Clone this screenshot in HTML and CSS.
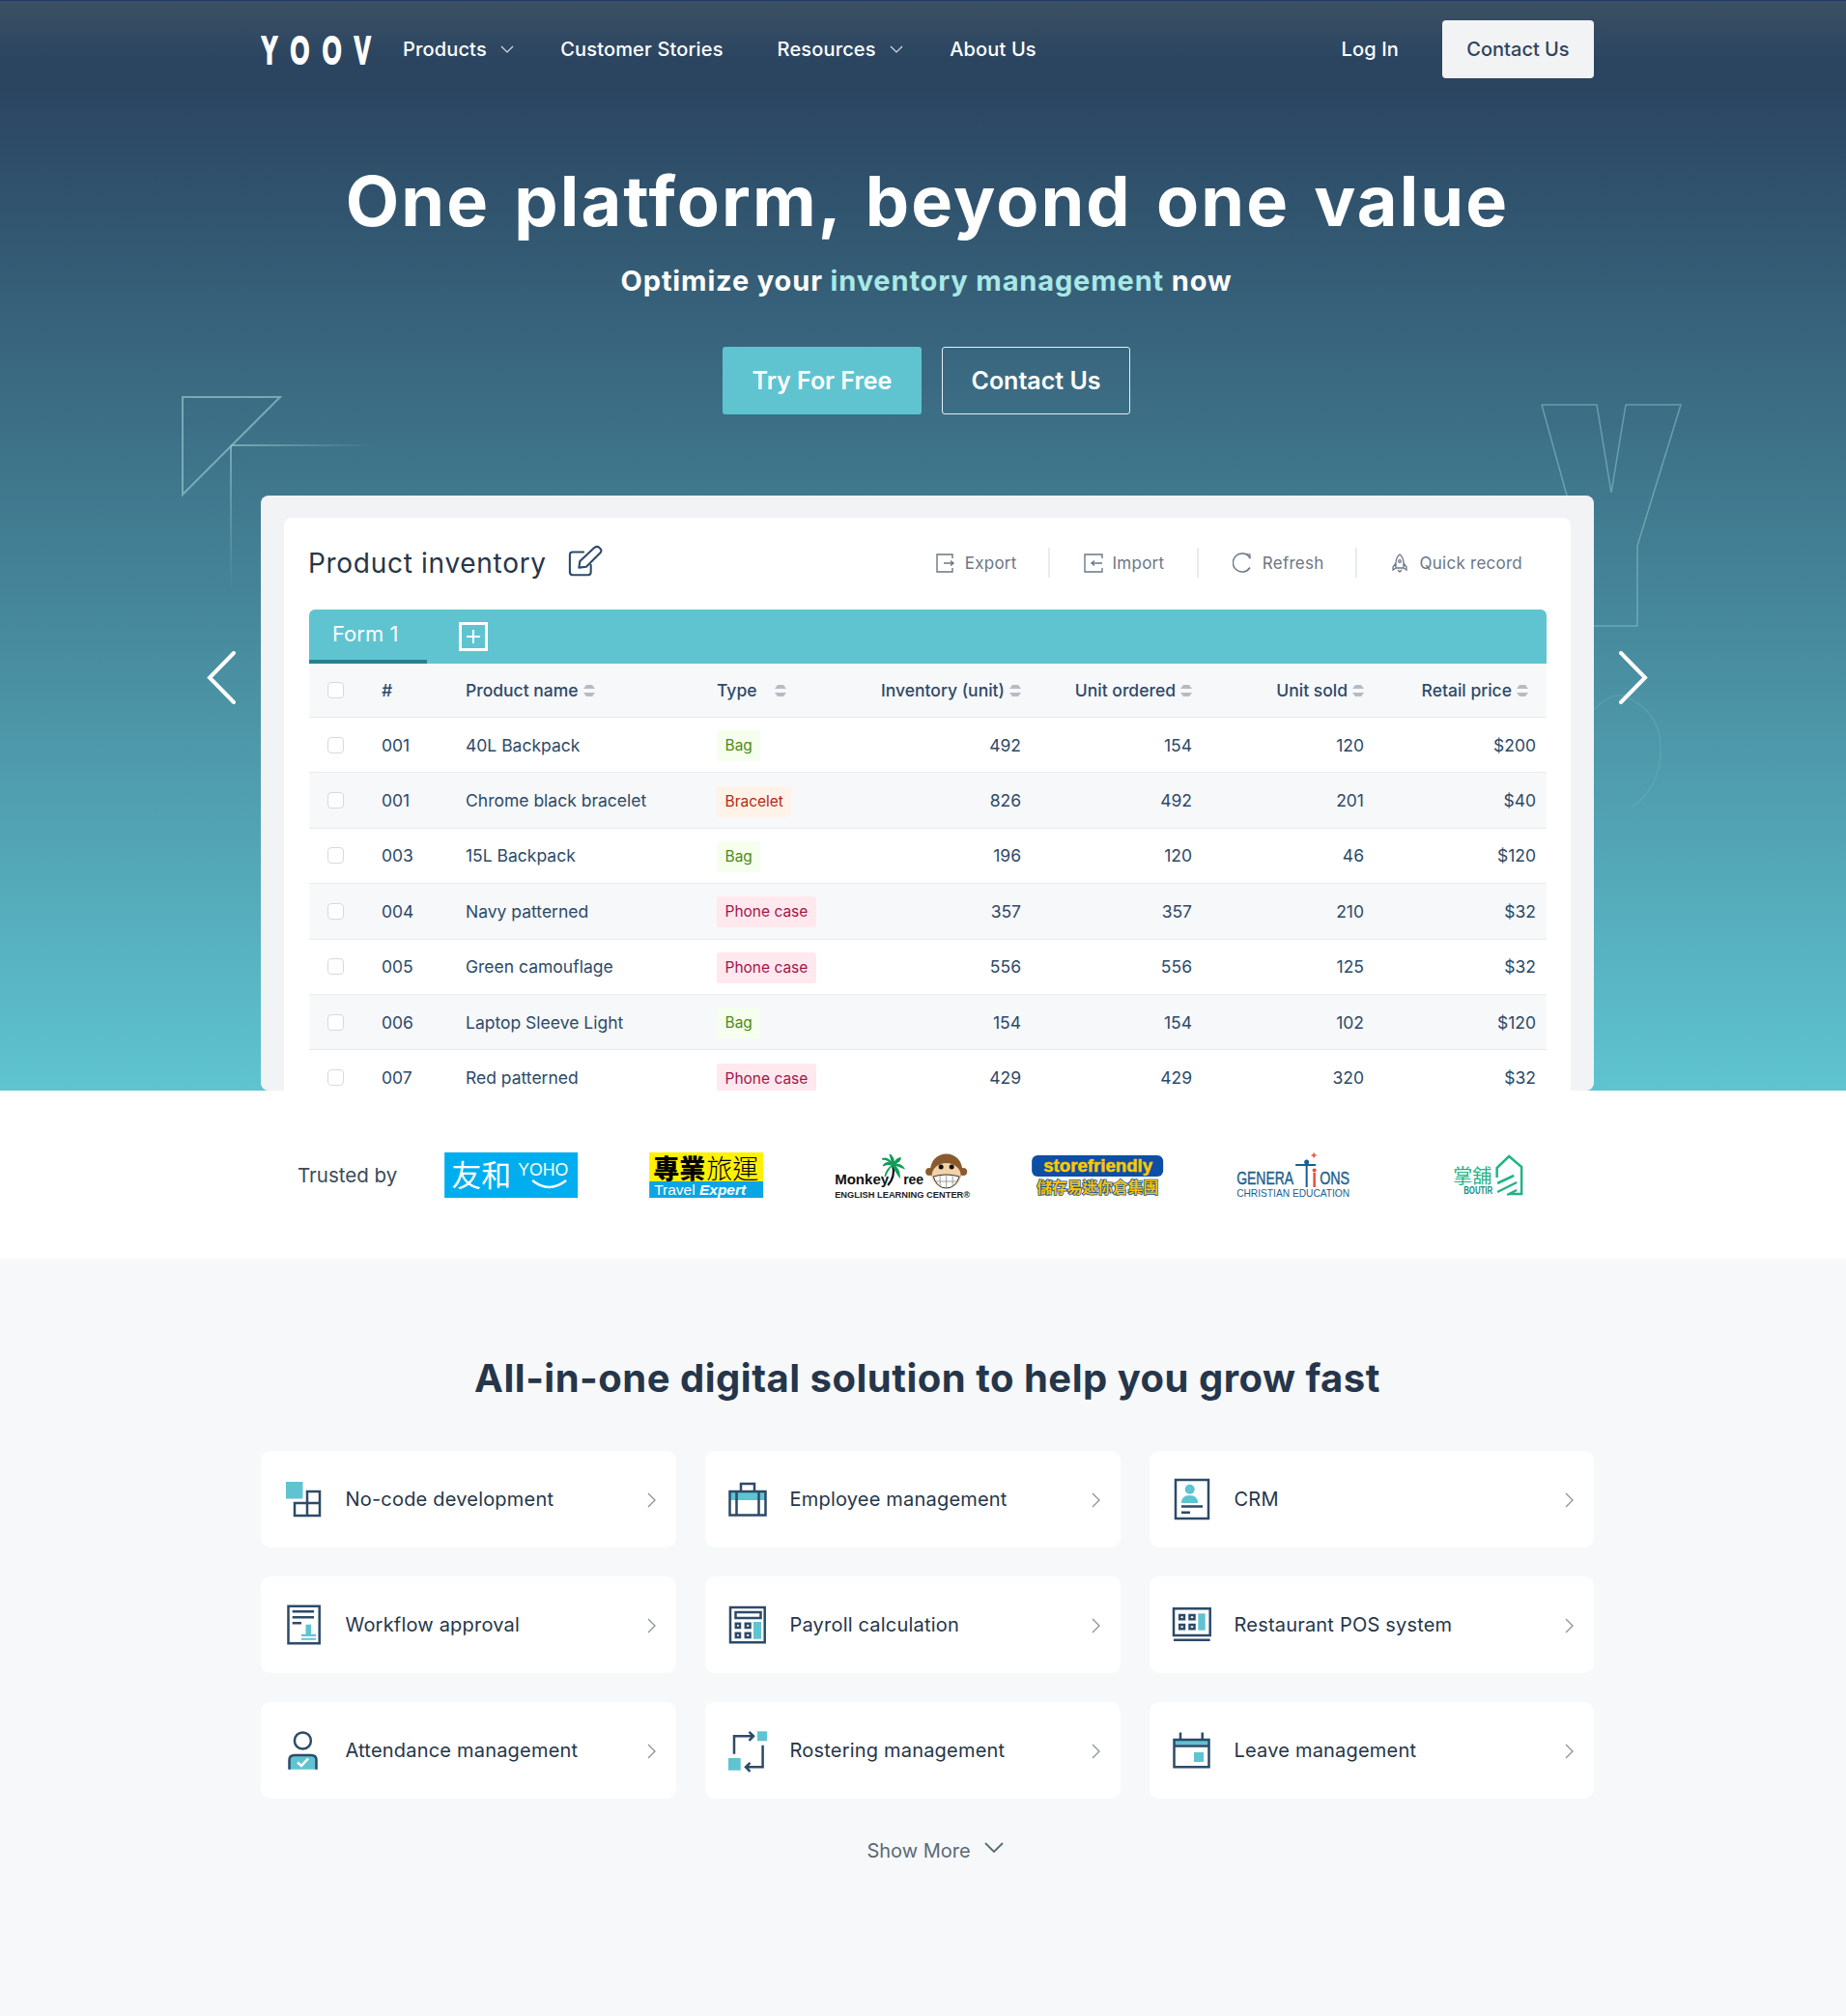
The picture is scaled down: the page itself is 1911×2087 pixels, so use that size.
FILE: index.html
```html
<!DOCTYPE html>
<html lang="en">
<head>
<meta charset="UTF-8" />
<title>YOOV</title>
<link rel="stylesheet" href="styles.css">
</head>
<body>

<section class="hero">
  <svg class="decor" width="1911" height="1129" viewBox="0 0 1911 1129" fill="none">
    <defs>
      <linearGradient id="fade-h" x1="0" x2="1" y1="0" y2="0"><stop offset="0" stop-color="#8fc4cc" stop-opacity=".7"/><stop offset="1" stop-color="#8fc4cc" stop-opacity="0"/></linearGradient>
      <linearGradient id="fade-v" x1="0" x2="0" y1="0" y2="1"><stop offset="0" stop-color="#8fc4cc" stop-opacity=".7"/><stop offset="1" stop-color="#8fc4cc" stop-opacity="0"/></linearGradient>
    </defs>
    <path d="M189 411H290L189 512Z" stroke="#8fc4cc" stroke-opacity=".7" stroke-width="2"/>
    <rect x="239" y="460" width="152" height="2" fill="url(#fade-h)"/>
    <rect x="238" y="461" width="2" height="150" fill="url(#fade-v)"/>
    <path d="M1596 419H1653L1668 510L1683 419H1740L1695 565V648H1650M1596 419L1622 513" stroke="#8fc4cc" stroke-opacity=".55" stroke-width="1.5"/>
    <path d="M1650 735Q1665 718 1680 720Q1719 735 1719 775Q1719 815 1690 835" stroke="#8fc4cc" stroke-opacity=".22" stroke-width="1.5"/>
  </svg>

  <div class="wrap">
    <nav class="nav">
      <svg class="logo" width="116" height="46" viewBox="0 -8 116 46"><text class="logo-text" y="30" transform="scale(.62 1)" x="1 49 103 156">YOOV</text></svg>
      <a class="nav-link nav-products">Products <svg class="nav-chev" width="14" height="8" viewBox="0 0 14 8"><path d="M1 1L7 7L13 1"/></svg></a>
      <a class="nav-link nav-stories">Customer Stories</a>
      <a class="nav-link nav-resources">Resources <svg class="nav-chev" width="14" height="8" viewBox="0 0 14 8"><path d="M1 1L7 7L13 1"/></svg></a>
      <a class="nav-link">About Us</a>
      <a class="nav-link nav-login">Log In</a>
      <a class="nav-contact">Contact Us</a>
    </nav>

    <h1 class="hero-title">One platform, beyond one value</h1>
    <p class="hero-sub">Optimize your <span class="hl">inventory management</span> now</p>
    <div class="hero-btns">
      <a class="btn btn-try">Try For Free</a>
      <a class="btn btn-outline">Contact Us</a>
    </div>

    <div class="card">
      <div class="panel">
        <div class="toolbar">
          <span class="panel-title">Product inventory</span>
          <svg class="edit-icon" width="36" height="34" viewBox="0 0 38 34" fill="none" stroke="#2d4a69" stroke-width="2.2" stroke-linecap="round" stroke-linejoin="round"><path d="M17 7H5Q2 7 2 10V29Q2 32 5 32H22Q25 32 25 29V21"/><path d="M12 24L13 17L29 2Q32 0 34 2L36 4Q37 6 35 8L20 23Z"/></svg>
          <div class="actions">
            <span class="action action-export"><svg width="20" height="20" viewBox="0 0 20 20" fill="none" stroke="#6b7785" stroke-width="1.4"><path d="M17 5V1H1V19H17V15M8 10H18M15 7.500L18 10L15 12.500"/></svg>Export</span>
            <span class="action action-import"><svg width="20" height="20" viewBox="0 0 20 20" fill="none" stroke="#6b7785" stroke-width="1.4"><path d="M19 5V1H1V19H19V15M19 10H8M11 7.500L8 10L11 12.500"/></svg>Import</span>
            <span class="action action-refresh"><svg width="21" height="21" viewBox="0 0 21 21" fill="none" stroke="#6b7785" stroke-width="1.5"><path d="M18 5.500A9.500 9.500 0 1 0 18 15.500"/><path d="M14 1.500L18 2V6.500" stroke-width="1.2"/></svg>Refresh</span>
            <span class="action action-quick"><svg width="18" height="20" viewBox="0 0 16 20" fill="none" stroke="#6b7785" stroke-width="1.3"><path d="M8 1Q12 4 12 10V15H4V10Q4 4 8 1ZM4 10L1 14V17L4 15M12 10L15 14V17L12 15M6 17L8 19L10 17"/><circle cx="8" cy="8" r="1.3"/></svg>Quick record</span>
          </div>
        </div>

        <div class="tabs">
          <span class="tab">Form 1</span>
          <span class="tab-add"></span>
        </div>

        <div class="row row-head">
          <span class="check"></span><span>#</span>
          <span>Product name<i class="sort"></i></span>
          <span>Type<i class="sort sort-wide"></i></span>
          <span class="num">Inventory (unit)<i class="sort"></i></span>
          <span class="num">Unit ordered<i class="sort"></i></span>
          <span class="num">Unit sold<i class="sort"></i></span>
          <span class="num last">Retail price<i class="sort"></i></span>
        </div>
        <div class="row">
          <span class="check"></span><span>001</span><span>40L Backpack</span><span><b class="tag tag-green">Bag</b></span>
          <span class="num">492</span><span class="num">154</span><span class="num">120</span><span class="num">$200</span>
        </div>
        <div class="row row-alt">
          <span class="check"></span><span>001</span><span>Chrome black bracelet</span><span><b class="tag tag-orange">Bracelet</b></span>
          <span class="num">826</span><span class="num">492</span><span class="num">201</span><span class="num">$40</span>
        </div>
        <div class="row">
          <span class="check"></span><span>003</span><span>15L Backpack</span><span><b class="tag tag-green">Bag</b></span>
          <span class="num">196</span><span class="num">120</span><span class="num">46</span><span class="num">$120</span>
        </div>
        <div class="row row-alt">
          <span class="check"></span><span>004</span><span>Navy patterned</span><span><b class="tag tag-pink">Phone case</b></span>
          <span class="num">357</span><span class="num">357</span><span class="num">210</span><span class="num">$32</span>
        </div>
        <div class="row">
          <span class="check"></span><span>005</span><span>Green camouflage</span><span><b class="tag tag-pink">Phone case</b></span>
          <span class="num">556</span><span class="num">556</span><span class="num">125</span><span class="num">$32</span>
        </div>
        <div class="row row-alt">
          <span class="check"></span><span>006</span><span>Laptop Sleeve Light</span><span><b class="tag tag-green">Bag</b></span>
          <span class="num">154</span><span class="num">154</span><span class="num">102</span><span class="num">$120</span>
        </div>
        <div class="row">
          <span class="check"></span><span>007</span><span>Red patterned</span><span><b class="tag tag-pink">Phone case</b></span>
          <span class="num">429</span><span class="num">429</span><span class="num">320</span><span class="num">$32</span>
        </div>
      </div>
    </div>
  </div>

  <svg class="arrow arrow-left" width="31" height="55" viewBox="0 0 31 55" fill="none"><path d="M28 2L3 27.500L28 53"/></svg>
  <svg class="arrow arrow-right" width="31" height="55" viewBox="0 0 31 55" fill="none"><path d="M3 2L28 27.500L3 53"/></svg>
</section>

<section class="trusted">
  <div class="wrap trusted-row">
    <span class="trusted-label">Trusted by</span>
    <div class="logos">
      <svg class="logo-slot" viewBox="0 -10 202 70">
        <rect x="32" y="1" width="138" height="47" fill="#00aeef"/>
        <text class="lg-cjk" x="39" y="36" font-size="31" fill="#fff">友和</text>
        <text class="lg-sans" x="108" y="25" font-size="19" fill="#fff" textLength="52" lengthAdjust="spacingAndGlyphs">YOHO</text>
        <path d="M123 30Q140 44 158 30" fill="none" stroke="#fff" stroke-width="2.500"/>
      </svg>
      <svg class="logo-slot" viewBox="0 -10 202 70">
        <rect x="42" y="1" width="118" height="30" fill="#fff200"/>
        <rect x="42" y="31" width="118" height="17" fill="#0ba5e4"/>
        <text class="lg-cjk lg-heavy" x="46" y="28" font-size="27" fill="#000">專業</text>
        <text class="lg-cjk lg-thin" x="101" y="28" font-size="27" fill="#000">旅運</text>
        <text class="lg-sans" x="47" y="45" font-size="15.500" fill="#fff">Travel <tspan class="lg-expert">Expert</tspan></text>
      </svg>
      <svg class="logo-slot" viewBox="0 -10 202 70">
        <text class="lg-sans lg-bold" x="31" y="34" font-size="15" fill="#111" textLength="56" lengthAdjust="spacingAndGlyphs">Monkey</text>
        <text class="lg-sans lg-bold" x="102" y="34" font-size="15" fill="#111" textLength="21" lengthAdjust="spacingAndGlyphs">ree</text>
        <path d="M91 14Q94 26 86 35" fill="none" stroke="#111" stroke-width="2.200"/>
        <path d="M91 14Q85 9 81 15Q84 12 91 14ZM91 14Q86 5 80 8Q86 7 91 14ZM91 14Q89 5 88 3Q94 8 91 14ZM91 14Q96 6 99 7Q99 10 91 14ZM91 14Q99 12 102 17Q96 14 91 14ZM91 14Q98 18 98 26Q93 19 91 14ZM91 14Q84 19 83 26Q86 18 91 14Z" fill="#0f9d58" stroke="#0f9d58" stroke-width="1.500"/>
        <circle cx="129" cy="21" r="4" fill="#8a5a2e"/><circle cx="164" cy="21" r="4" fill="#8a5a2e"/>
        <circle cx="146.500" cy="19" r="16.500" fill="#8a5a2e"/>
        <ellipse cx="146.500" cy="25" rx="15" ry="13" fill="#f2d2a6"/>
        <circle cx="141" cy="16" r="2.500" fill="#111"/><circle cx="152" cy="16" r="2.500" fill="#111"/>
        <path d="M133 26Q146.500 22 160 26Q156 38 146.500 38Q137 38 133 26Z" fill="#fff" stroke="#333"/>
        <path d="M140 25V36M146.500 24V38M153 25V36M135 31H158" stroke="#777" stroke-width=".7"/>
        <text class="lg-sans lg-bold" x="31" y="48" font-size="9.500" fill="#222" textLength="140" lengthAdjust="spacingAndGlyphs">ENGLISH LEARNING CENTER®</text>
      </svg>
      <svg class="logo-slot" viewBox="0 -10 202 70">
        <rect x="33" y="4" width="136" height="22" rx="6" fill="#0d4ea6"/>
        <text class="lg-sans lg-bold lg-fat" x="45" y="21" font-size="18.500" fill="#fdc800" textLength="113" lengthAdjust="spacingAndGlyphs">storefriendly</text>
        <text class="lg-cjk lg-outline" x="38" y="43" font-size="16" fill="#f5c400" textLength="126">儲存易迷你倉集團</text>
      </svg>
      <svg class="logo-slot" viewBox="0 -10 202 70">
        <text class="lg-sans lg-gen" x="43" y="34" font-size="18" fill="#1a5f8e" textLength="59" lengthAdjust="spacingAndGlyphs">GENERA</text>
        <text class="lg-sans lg-gen" x="129" y="34" font-size="18" fill="#1a5f8e" textLength="31" lengthAdjust="spacingAndGlyphs">ONS</text>
        <path d="M104 14H125M115.500 14V37" stroke="#1a5f8e" stroke-width="2"/>
        <circle cx="115.500" cy="11" r="2.500" fill="#1a5f8e"/>
        <path d="M123.500 22V37" stroke="#e4513c" stroke-width="2.500"/>
        <circle cx="123.500" cy="19.500" r="2" fill="#e4513c"/>
        <path d="M123 1.500V6.500M120.500 4H125.500" stroke="#e4513c" stroke-width="1.500"/>
        <text class="lg-sans" x="43" y="47" font-size="11" fill="#1a5f8e" textLength="117" lengthAdjust="spacingAndGlyphs">CHRISTIAN EDUCATION</text>
      </svg>
      <svg class="logo-slot" viewBox="0 -10 202 70">
        <text class="lg-cjk" x="65" y="33" font-size="20" fill="#1fb487">掌舖</text>
        <text class="lg-sans lg-bold" x="76" y="44" font-size="10" fill="#178f8a" textLength="30" lengthAdjust="spacingAndGlyphs">BOUTIR</text>
        <path d="M110.500 27V17L123 5L136 16V44H123M111 33L128 25M111 42L131 32M121 45L131 40" fill="none" stroke="#1fb487" stroke-width="2.500"/>
      </svg>
    </div>
  </div>
</section>

<section class="solutions">
  <h2 class="solutions-title">All-in-one digital solution to help you grow fast</h2>
  <div class="wrap sol-grid">
    <a class="sol-card">
      <svg class="sol-icon" viewBox="0 0 44 52"><rect class="t" x="4" y="8" width="17.500" height="17.500"/><path class="n" d="M26 30V18H39V43H13V30H39M26 30V43"/></svg>
      <span class="sol-label">No-code development</span>
      <svg class="sol-chev" viewBox="0 0 9 16"><path d="M1 1L8 8L1 15"/></svg>
    </a>
    <a class="sol-card">
      <svg class="sol-icon" viewBox="0 0 44 52"><rect class="t" x="3" y="19" width="38" height="8"/><path class="n" d="M3.500 18H40.500V42.500H3.500ZM15 18V10H29V18M10.500 18V42.500M33.500 18V42.500"/></svg>
      <span class="sol-label">Employee management</span>
      <svg class="sol-chev" viewBox="0 0 9 16"><path d="M1 1L8 8L1 15"/></svg>
    </a>
    <a class="sol-card">
      <svg class="sol-icon" viewBox="0 0 44 52"><circle class="t" cx="19.700" cy="15.700" r="5"/><path class="t" d="M11 30Q11 22 19.500 22Q28 22 28 30Z"/><path class="n" d="M5 6H39V46H5ZM11 33.500H33M11 39.700H20"/></svg>
      <span class="sol-label">CRM</span>
      <svg class="sol-chev" viewBox="0 0 9 16"><path d="M1 1L8 8L1 15"/></svg>
    </a>
    <a class="sol-card">
      <svg class="sol-icon" viewBox="0 0 44 52"><path class="n" d="M6.500 6.700H38.700V45.300H6.500ZM10.700 12.300H33M10.700 18.300H33M10.700 24.300H20"/><path class="t" d="M24.500 25.700H30V35.700H35V38H20V35.700H24.500ZM20 39.700H35V41.700H20Z"/></svg>
      <span class="sol-label">Workflow approval</span>
      <svg class="sol-chev" viewBox="0 0 9 16"><path d="M1 1L8 8L1 15"/></svg>
    </a>
    <a class="sol-card">
      <svg class="sol-icon" viewBox="0 0 44 52"><rect class="t" x="28" y="23" width="8" height="17.700"/><path class="n" d="M4 8H39.700V44.300H4ZM9.500 13H35.500V19H9.500ZM9.800 24.800H14V29H9.800ZM19.800 24.800H24.500V29H19.800ZM9.800 34.800H14V39H9.800ZM19.800 34.800H24.500V39H19.800Z"/></svg>
      <span class="sol-label">Payroll calculation</span>
      <svg class="sol-chev" viewBox="0 0 9 16"><path d="M1 1L8 8L1 15"/></svg>
    </a>
    <a class="sol-card">
      <svg class="sol-icon" viewBox="0 0 44 52"><rect class="t" x="28.300" y="14.300" width="7.400" height="17.400"/><path class="n" d="M3 9.300H40.700V37H3ZM3 41.800H40.700M9.200 16H14V20.300H9.200ZM19.500 16H24.500V20.300H19.500ZM9.200 26H14V30.300H9.200ZM19.500 26H24.500V30.300H19.500Z"/></svg>
      <span class="sol-label">Restaurant POS system</span>
      <svg class="sol-chev" viewBox="0 0 9 16"><path d="M1 1L8 8L1 15"/></svg>
    </a>
    <a class="sol-card">
      <svg class="sol-icon" viewBox="0 0 44 52"><path class="t" d="M7.500 45.700V36Q7.500 31 13 31H30Q35.500 31 35.500 36V45.700Z"/><path class="n" d="M7.500 45.700V36Q7.500 31 13 31H30Q35.500 31 35.500 36V45.700"/><circle class="n" cx="21.400" cy="16" r="8.500"/><path class="w" d="M16 38.500L20 42L27 34.500"/></svg>
      <span class="sol-label">Attendance management</span>
      <svg class="sol-chev" viewBox="0 0 9 16"><path d="M1 1L8 8L1 15"/></svg>
    </a>
    <a class="sol-card">
      <svg class="sol-icon" viewBox="0 0 44 52"><rect class="t" x="32" y="6.300" width="10" height="10"/><rect class="t" x="2" y="34" width="12.700" height="12.700"/><path class="n" d="M8 29.700V11.300H27M23.500 6.800L28 11.300L23.500 15.800M37.600 20.700V43.300H20M24.500 38.800L20 43.300L24.500 47.800"/></svg>
      <span class="sol-label">Rostering management</span>
      <svg class="sol-chev" viewBox="0 0 9 16"><path d="M1 1L8 8L1 15"/></svg>
    </a>
    <a class="sol-card">
      <svg class="sol-icon" viewBox="0 0 44 52"><rect class="t" x="3" y="15.500" width="37" height="5"/><rect class="t" x="24" y="28" width="10" height="10"/><path class="n" d="M3.500 15H39.500V43.300H3.500ZM3 21.500H40M10 7.500V15M32.700 7.500V15"/></svg>
      <span class="sol-label">Leave management</span>
      <svg class="sol-chev" viewBox="0 0 9 16"><path d="M1 1L8 8L1 15"/></svg>
    </a>
  </div>
  <a class="show-more">Show More <svg width="20" height="12" viewBox="0 0 20 12" fill="none"><path d="M1 1L10 10L19 1"/></svg></a>
</section>

</body>
</html>
```

FILE: styles.css
```css
* { box-sizing: border-box; }
body { margin: 0; font-family: Inter, "Noto Sans CJK TC", sans-serif; color: #2d4a69; background: #f7f8fa; }
a { text-decoration: none; color: inherit; }
p, h1, h2 { margin: 0; }

.wrap { width: 1380px; margin-left: 270px; position: relative; }

/* hero */
.hero {
  position: relative;
  height: 1129px;
  overflow: hidden;
  border-top: 1px solid #1f3a68;
  background:
    linear-gradient(rgba(125,125,110,.2), rgba(125,125,110,0) 60px),
    linear-gradient(#2b4561 90px, #5fc4d0 1128px);
}
.decor { position: absolute; left: 0; top: -1px; }

.nav { display: flex; align-items: center; height: 60px; margin-top: 20px; color: #fff; }
.logo { margin-right: 31px; }
.logo-text { font: 700 41px "Liberation Sans", sans-serif; fill: #fff; stroke: #fff; stroke-width: 2px; }
.nav-link { font-size: 20px; font-weight: 500; letter-spacing: .15px; display: flex; align-items: center; white-space: pre; }
.nav-chev { fill: none; stroke: #d5dde4; stroke-width: 1.2; margin-left: 9px; }
.nav-products { margin-right: 48px; }
.nav-stories { margin-right: 56px; }
.nav-resources { margin-right: 48px; }
.nav-login { margin-left: auto; margin-right: 45px; }
.nav-contact {
  width: 157px; height: 60px; display: flex; align-items: center; justify-content: center;
  background: #f2f3f5; border-radius: 4px; color: #2d4560; font-size: 20px; font-weight: 500;
}

.hero-title { margin-top: 82px; height: 90px; line-height: 90px; text-align: center; color: #fff; font-size: 72px; font-weight: 700; letter-spacing: 2.100px; word-spacing: 6px; white-space: nowrap; }
.hero-sub { margin-top: 18px; height: 40px; line-height: 40px; padding-right: 2px; text-align: center; color: #fff; font-size: 29px; font-weight: 700; letter-spacing: .85px; }
.hl { color: #a9e8e6; }
.hero-btns { display: flex; justify-content: center; gap: 21px; margin-top: 48px; padding-right: 2px; }
.btn { height: 70px; display: flex; align-items: center; justify-content: center; border-radius: 3px; color: #fff; font-size: 25px; font-weight: 600; }
.btn-try { width: 206px; background: #5fc4d0; }
.btn-outline { width: 195px; border: 1.5px solid #e8eef2; }

.card { height: 616px; overflow: hidden; margin-top: 84px; padding: 23px 24px 0; background: #f2f3f5; border-radius: 8px; }
.panel { background: #fff; border-radius: 8px 8px 0 0; padding: 0 25px 0 26px; }

.toolbar { display: flex; align-items: center; height: 95px; padding-bottom: 2px; }
.panel-title { font-size: 28px; font-weight: 400; letter-spacing: .7px; color: #25364a; margin-left: -1px; }
.edit-icon { margin-left: 22px; margin-top: -4px; }
.actions { margin-left: auto; display: flex; align-items: center; color: #6b7785; font-size: 17px; letter-spacing: .25px; }
.action { display: flex; align-items: center; gap: 10px; height: 31px; padding: 0 35px; border-left: 2px solid #e8ebef; }
.action-export { border-left: 0; padding-right: 32px; }
.action-import { padding-right: 33.500px; }
.action-refresh { padding-right: 32px; }
.action-quick { gap: 12px; padding-right: 25px; }

.tabs { display: flex; align-items: center; height: 56px; background: #5fc4d0; border-radius: 6px 6px 0 0; }
.tab { width: 122px; height: 56px; line-height: 50px; padding-left: 24px; color: #fff; font-size: 22px; border-bottom: 4px solid #267f90; }
.tab-add { position: relative; width: 30px; height: 30px; margin-left: 33px; border: 3px solid #fff; }
.tab-add::before, .tab-add::after { content: ""; position: absolute; background: #fff; }
.tab-add::before { left: 5px; right: 5px; top: 11px; height: 2px; }
.tab-add::after { top: 5px; bottom: 5px; left: 11px; width: 2px; }

.row {
  display: grid;
  grid-template-columns: 75px 87px 260px 150px 165px 177px 178px 178px 11px;
  align-items: center;
  height: 57.400px;
  font-size: 17.500px;
  background: #fff;
  border-bottom: 1.5px solid #e8ebef;
  white-space: nowrap;
}
.row-alt, .row-head { background: #f7f8fa; }
.row-head { height: 56px; font-weight: 500; }
.num { text-align: right; }
.last { padding-right: 8px; }
.check { width: 17px; height: 17px; margin-left: 19px; background: #fff; border: 1px solid #d5d9e0; border-radius: 4px; }
.sort { display: inline-flex; flex-direction: column; gap: 4px; margin-left: 5px; margin-bottom: 2px; vertical-align: middle; }
.sort::before, .sort::after { content: ""; width: 6px; height: 0; border-left: 3px solid transparent; border-right: 3px solid transparent; }
.sort::before { border-bottom: 4px solid #b6bcc5; }
.sort::after { border-top: 4px solid #b6bcc5; }
.sort-wide { margin-left: 18px; }
.tag { display: inline-block; height: 32px; line-height: 32px; margin-top: 2px; padding: 0 8.500px; border-radius: 3px; font-size: 15.500px; font-weight: 400; }
.tag-green { background: #f6ffed; color: #4e8a14; }
.tag-orange { background: #fff2e8; color: #ad2e0e; }
.tag-pink { background: #ffe8ee; color: #a3154a; }

.arrow { position: absolute; stroke: #fff; stroke-width: 4; stroke-linecap: round; top: 673px; }
.arrow-left { left: 214px; }
.arrow-right { left: 1675px; }

/* logos */
.trusted { height: 174px; background: #fff; }
.trusted-row { display: flex; padding-top: 53px; }
.trusted-label { width: 158px; padding-left: 38px; padding-top: 10px; line-height: 50px; height: 70px; font-size: 20.500px; color: #3a4a5a; flex: none; }
.logos { display: flex; }
.logo-slot { width: 202.300px; height: 70px; flex: none; }
.lg-sans { font-family: "Liberation Sans", sans-serif; }
.lg-bold { font-weight: 700; }
.lg-fat { stroke: #fdc800; stroke-width: .5px; }
.lg-gen { stroke: #1a5f8e; stroke-width: .4px; }
.lg-expert { font-weight: 700; font-style: italic; }
.lg-cjk { font-family: "Noto Sans CJK TC", sans-serif; }
.lg-heavy { font-weight: 900; }
.lg-thin { font-weight: 300; }
.lg-outline { font-weight: 700; stroke: #0d4ea6; stroke-width: 1.500px; paint-order: stroke; }

/* solutions */
.solutions { height: 784px; background: #f7f8fa; }
.solutions-title { padding-top: 98px; padding-left: 9px; height: 199px; line-height: 52px; text-align: center; font-size: 40px; font-weight: 700; letter-spacing: .5px; color: #25364a; }
.sol-grid { display: grid; grid-template-columns: 430px 430px 460px; grid-auto-rows: 100px; gap: 30px; }
.sol-card { display: flex; align-items: center; padding: 0 21px 0 22px; background: #fff; border-radius: 10px; }
.sol-icon { width: 44px; height: 52px; flex: none; }
.sol-icon .n { fill: none; stroke: #2d4a69; stroke-width: 2.500; }
.sol-icon .t { fill: #5fc3d1; }
.sol-icon .w { fill: none; stroke: #fff; stroke-width: 2.500; }
.sol-label { margin-left: 21.500px; font-size: 20px; letter-spacing: .2px; color: #25364a; }
.sol-chev { width: 9px; height: 16px; margin-left: auto; margin-top: 2px; fill: none; stroke: #8a929c; stroke-width: 1.300; }
.show-more { display: flex; align-items: center; justify-content: center; gap: 14px; margin-top: 42px; padding-left: 25px; font-size: 20px; color: #5a6a78; }
.show-more svg { stroke: #5a6a78; stroke-width: 1.800; margin-top: -6px; }
```
